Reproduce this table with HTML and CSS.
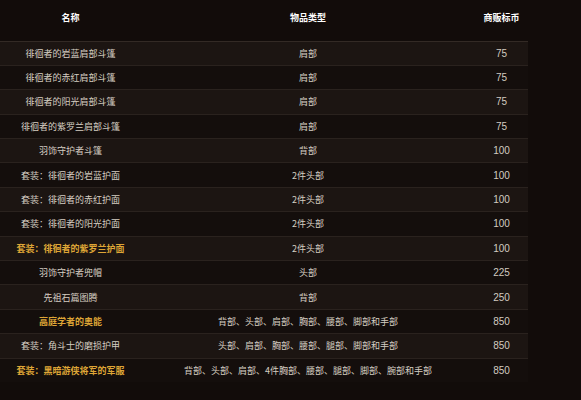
FILE: index.html
```html
<!DOCTYPE html>
<html lang="zh-CN">
<head>
<meta charset="utf-8">
<title>物品列表</title>
<link rel="stylesheet" href="styles.css">
</head>
<body>
<div class="page">
  <table class="items">
    <colgroup>
      <col class="c-name">
      <col class="c-type">
      <col class="c-price">
    </colgroup>
    <thead>
      <tr><th>名称</th><th>物品类型</th><th>商贩标币</th></tr>
    </thead>
    <tbody>
      <tr><td>徘徊者的岩蓝肩部斗篷</td><td>肩部</td><td class="num">75</td></tr>
      <tr><td>徘徊者的赤红肩部斗篷</td><td>肩部</td><td class="num">75</td></tr>
      <tr><td>徘徊者的阳光肩部斗篷</td><td>肩部</td><td class="num">75</td></tr>
      <tr><td>徘徊者的紫罗兰肩部斗篷</td><td>肩部</td><td class="num">75</td></tr>
      <tr><td>羽饰守护者斗篷</td><td>背部</td><td class="num">100</td></tr>
      <tr><td>套装：徘徊者的岩蓝护面</td><td>2件头部</td><td class="num">100</td></tr>
      <tr><td>套装：徘徊者的赤红护面</td><td>2件头部</td><td class="num">100</td></tr>
      <tr><td>套装：徘徊者的阳光护面</td><td>2件头部</td><td class="num">100</td></tr>
      <tr><td class="gold">套装：徘徊者的紫罗兰护面</td><td>2件头部</td><td class="num">100</td></tr>
      <tr><td>羽饰守护者兜帽</td><td>头部</td><td class="num">225</td></tr>
      <tr><td>先祖石篇图腾</td><td>背部</td><td class="num">250</td></tr>
      <tr><td class="gold">高庭学者的奥能</td><td>背部、头部、肩部、胸部、腰部、脚部和手部</td><td class="num">850</td></tr>
      <tr><td>套装：角斗士的磨损护甲</td><td>头部、肩部、胸部、腰部、腿部、脚部和手部</td><td class="num">850</td></tr>
      <tr><td class="gold">套装：黑暗游侠将军的军服</td><td>背部、头部、肩部、4件胸部、腰部、腿部、脚部、腕部和手部</td><td class="num">850</td></tr>
    </tbody>
  </table>
</div>
</body>
</html>
```

FILE: styles.css
```css
html, body {
  margin: 0;
  padding: 0;
  background: #120c0a;
}
body {
  width: 581px;
  height: 400px;
  overflow: hidden;
  font-family: "Noto Sans CJK SC", "Noto Sans", sans-serif;
  color: #d6cec2;
}
.page {
  display: flex;
}
.items {
  width: 528px;
  border-collapse: collapse;
  table-layout: fixed;
  font-size: 9px;
}
.c-name { width: 141px; }
.c-type { width: 334px; }
.c-price { width: 53px; }

.items th {
  height: 41px;
  padding: 0 0 6px;
  box-sizing: border-box;
  color: #ffffff;
  font-weight: 700;
  text-align: center;
  vertical-align: middle;
  border-bottom: 1px solid #332a25;
}
.items td {
  height: 24.4px;
  padding: 0;
  box-sizing: border-box;
  text-align: center;
  vertical-align: middle;
  white-space: nowrap;
  border-bottom: 1px solid #2a221e;
}
.items tbody tr:nth-child(odd) {
  background: #1c1512;
}
.items tbody tr:nth-child(even) {
  background: #140e0c;
}
.items tbody tr:last-child td {
  border-bottom: none;
}
.items td.num {
  font-family: "Liberation Sans", Arial, sans-serif;
  font-size: 10px;
  color: #d2cbc0;
}
.items td.gold {
  color: #dea536;
  font-weight: 700;
}
```
